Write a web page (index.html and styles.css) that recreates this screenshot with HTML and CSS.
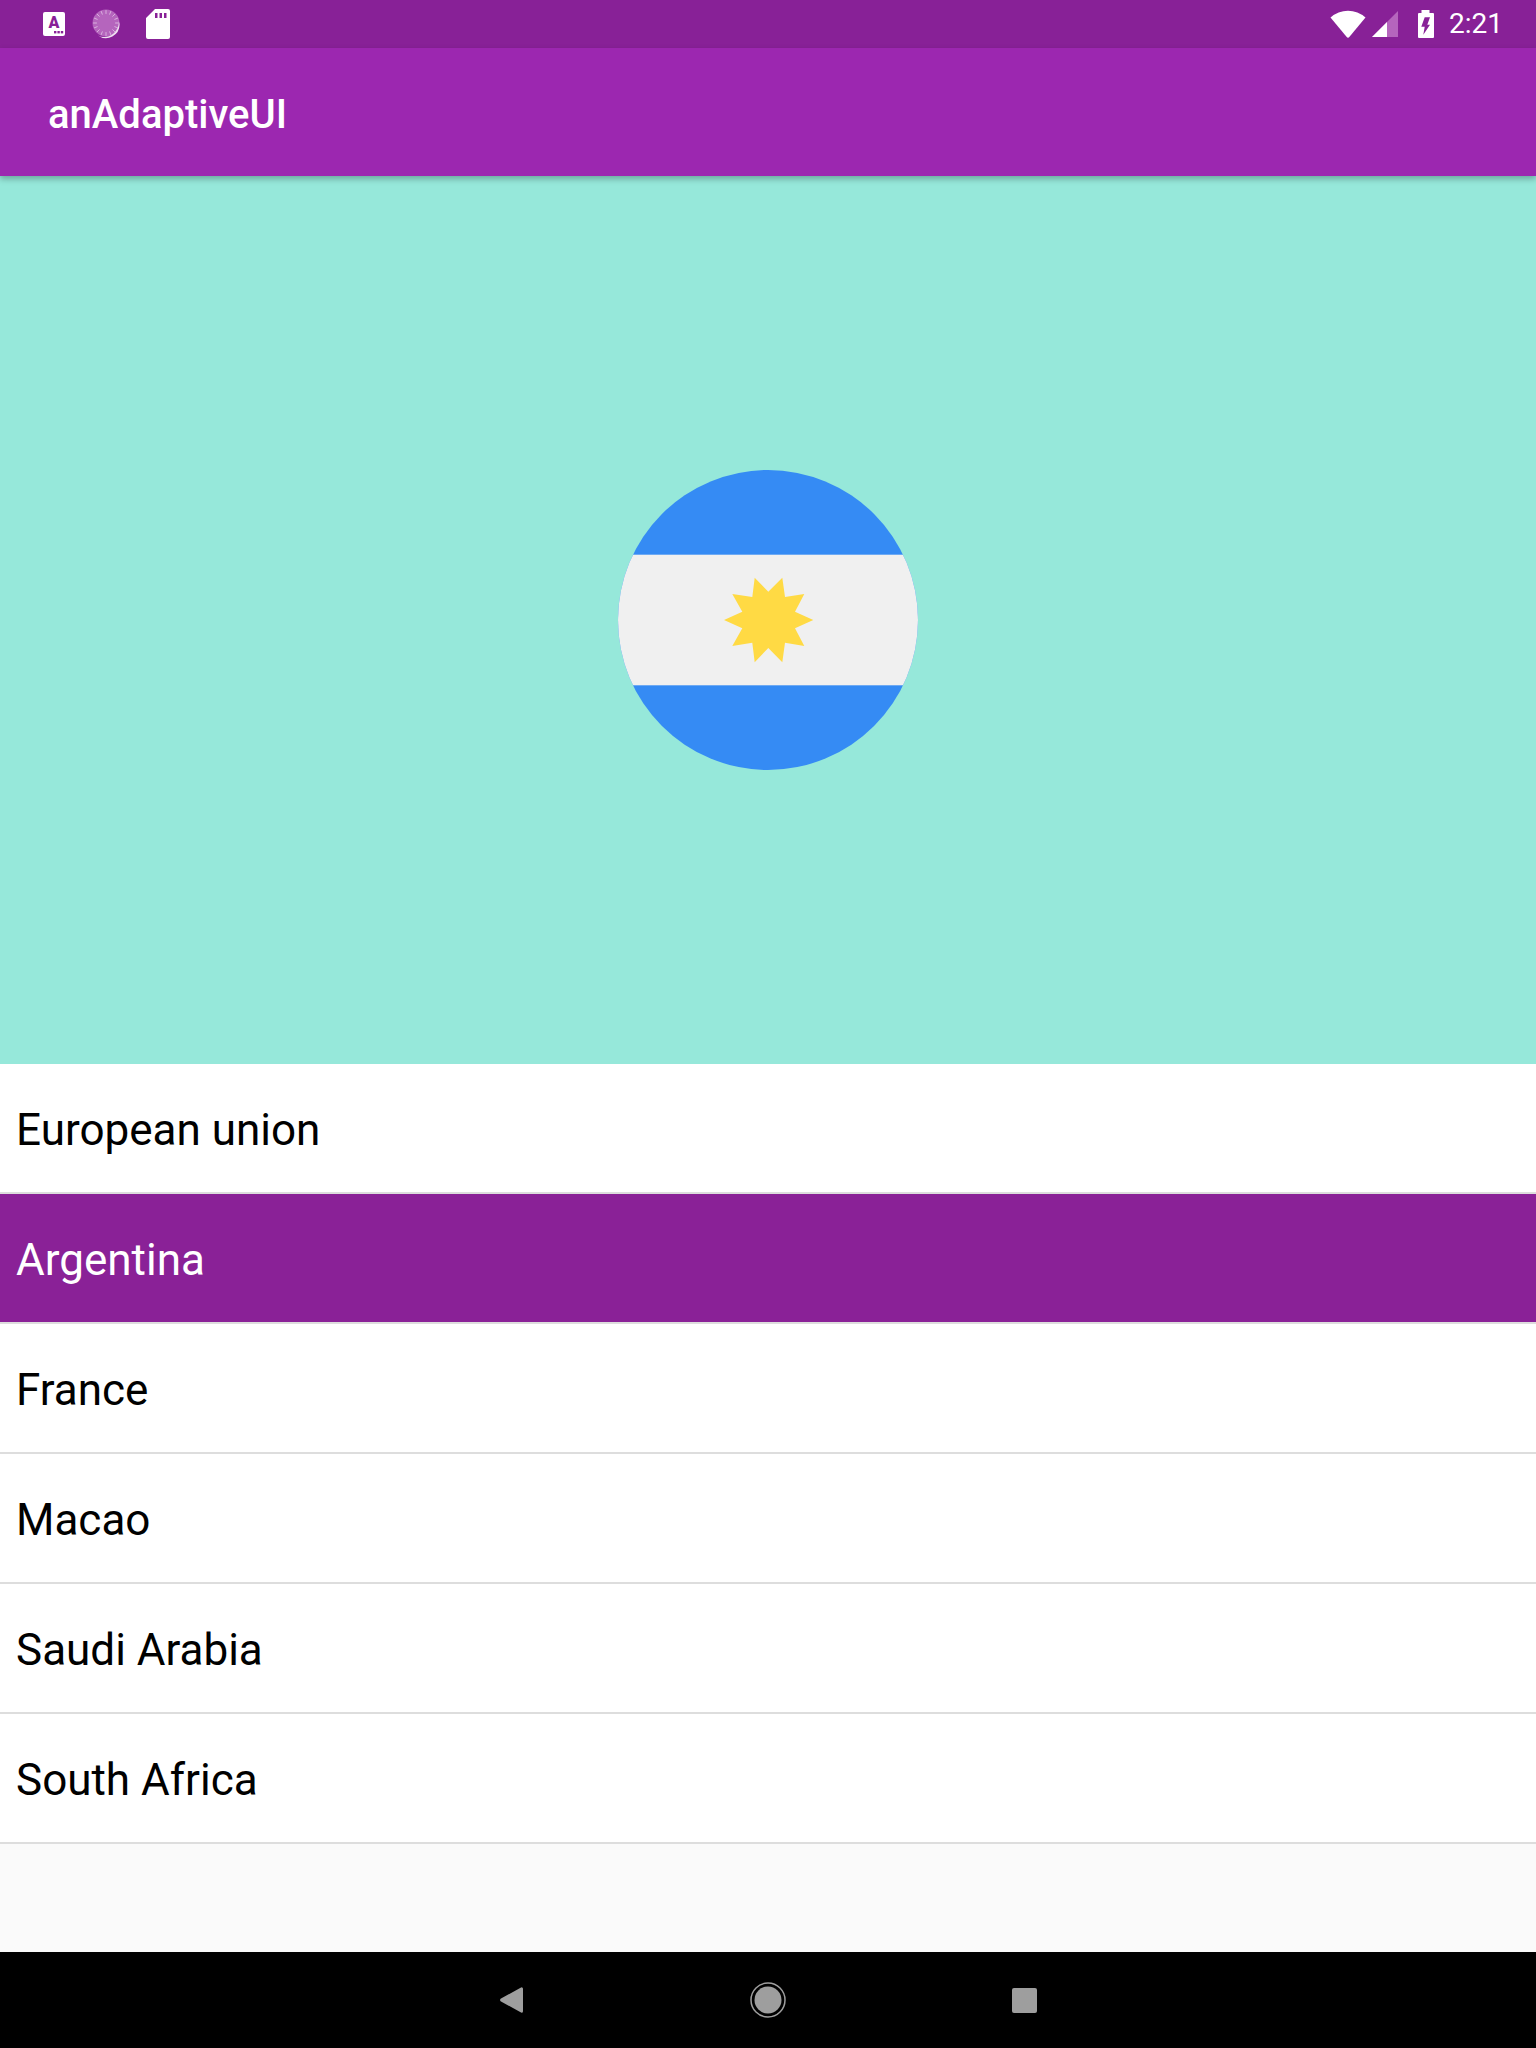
FILE: index.html
```html
<!DOCTYPE html>
<html>
<head>
    <title>anAdaptiveUI</title>
    <link rel="stylesheet" href="styles.css">
</head>
<body>
    <div class="status-bar">
        <div class="status-left">
            <!-- Notification icons -->
            <svg class="icon-a" width="22" height="24" viewBox="0 0 22 24">
                <rect x="0" y="0" width="22" height="24" rx="2" fill="#fff"/>
                <text x="11" y="15.5" text-anchor="middle" class="icon-a-letter">A</text>
                <rect x="11" y="19" width="2.4" height="2.4" fill="#882197"/>
                <rect x="14.4" y="19" width="2.4" height="2.4" fill="#882197"/>
                <rect x="17.8" y="19" width="2.4" height="2.4" fill="#882197"/>
            </svg>
            <svg class="icon-disc" width="30" height="30" viewBox="0 0 30 30">
                <circle cx="14" cy="14" r="13.5" fill="#b565bd"/>
                <path d="M27.5 15 A13.5 13.5 0 0 1 6 26.5 A14 14 0 0 0 25 20 A12 12 0 0 0 26.5 11 Z" fill="#efdff1"/>
                <g stroke="#d9b0de" stroke-width="1" stroke-linecap="round">
                    <path d="M14 1.5v3M14 23.500v3M1.500 14h3M23.500 14h3M5.200 5.200l2.100 2.100M20.700 20.700l2.100 2.100M5.200 22.800l2.100-2.100M20.700 7.300l2.100-2.100"/>
                    <path d="M9.200 2.400l1.100 2.800M17.700 22.800l1.100 2.800M2.400 18.800l2.800-1.100M22.800 10.300l2.800-1.100M2.400 9.200l2.800 1.100M22.800 17.700l2.800 1.100M9.200 25.600l1.100-2.800M17.700 5.200l1.100-2.800"/>
                </g>
            </svg>
            <svg class="icon-sd" width="24" height="30" viewBox="0 0 24 30">
                <path fill-rule="evenodd" fill="#fff" d="M9 0H22a2 2 0 0 1 2 2V28a2 2 0 0 1-2 2H2a2 2 0 0 1-2-2V9Z M9 4v5h2.500V4Z M13.500 4v5h2.500V4Z M18 4v5h2.500V4Z"/>
            </svg>
        </div>
        <div class="status-right">
            <svg width="36" height="28" viewBox="0 0 36 28">
                <path d="M0.500 7.500 A26 26 0 0 1 35.500 7.500 L19.500 26.800 a2 2 0 0 1-3 0 Z" fill="#fff"/>
            </svg>
            <svg width="26" height="26" viewBox="0 0 26 26">
                <path d="M26 0V26H0Z" fill="#b565bd"/>
                <path d="M15 11V26H0Z" fill="#fff"/>
            </svg>
            <svg class="icon-battery" width="16" height="28" viewBox="0 0 16 28">
                <path fill-rule="evenodd" fill="#fff" d="M3.500 0H11.500V3H15a1 1 0 0 1 1 1V27a1 1 0 0 1-1 1H1a1 1 0 0 1-1-1V4a1 1 0 0 1 1-1H3.500Z M6.700 7.300H12L9.300 14.700H12L5.300 24.700L6.700 16.700H3.300Z"/>
            </svg>
            <span class="status-time">2:21</span>
        </div>
    </div>

    <div class="app-bar">anAdaptiveUI</div>

    <div class="hero">
        <svg class="flag" width="300" height="300" viewBox="0 0 300 300">
            <defs>
                <clipPath id="flag-clip"><circle cx="150" cy="150" r="150"/></clipPath>
            </defs>
            <g clip-path="url(#flag-clip)">
                <rect width="300" height="300" fill="#358bf4"/>
                <rect y="84.700" width="300" height="130.600" fill="#f0f0f0"/>
            </g>
            <polygon fill="#ffda44" points="136.700,107.700 150.300,121.700 164.300,107.700 167,127 186.300,124 177,141.700 195.300,150 177,158.300 186.300,176 167,172.700 164.300,192.300 150.300,178 136.700,192.300 134.300,172.700 114.300,176 124.300,158.300 106,150 124.300,141.700 114.300,124 134.300,127"/>
        </svg>
    </div>

    <div class="country-list">
        <div class="country-row">European union</div>
        <div class="country-row selected">Argentina</div>
        <div class="country-row">France</div>
        <div class="country-row">Macao</div>
        <div class="country-row">Saudi Arabia</div>
        <div class="country-row">South Africa</div>
    </div>

    <div class="nav-bar">
        <div class="nav-cell">
            <svg width="24" height="26" viewBox="0 0 24 26">
                <path d="M21.500 0.300 a1.500 1.500 0 0 1 1.500 1.500 V24.200 a1.500 1.500 0 0 1-1.500 1.500 L1 14.500 a1.700 1.700 0 0 1 0-3 Z" fill="#9e9e9e"/>
            </svg>
        </div>
        <div class="nav-cell">
            <svg width="36" height="36" viewBox="0 0 36 36">
                <circle cx="18" cy="18" r="17" fill="none" stroke="#9e9e9e" stroke-width="1.500"/>
                <circle cx="18" cy="18" r="13.500" fill="#9e9e9e"/>
            </svg>
        </div>
        <div class="nav-cell">
            <div class="nav-square"></div>
        </div>
    </div>
</body>
</html>
```

FILE: styles.css
```css
/* Android tablet screen, 1536 x 2048 */
html, body {
    margin: 0;
    padding: 0;
}

body {
    width: 1536px;
    height: 2048px;
    display: flex;
    flex-direction: column;
    overflow: hidden;
    font-family: Roboto, "Noto Sans", sans-serif;
    background: #fafafa;
}

/* Status bar */
.status-bar {
    height: 48px;
    flex: none;
    display: flex;
    align-items: center;
    justify-content: space-between;
    background: #882197;
    color: #fff;
}

.status-left {
    display: flex;
    align-items: center;
    padding-left: 43px;
}

.icon-a {
    margin-right: 27px;
}

.icon-disc {
    margin-right: 24px;
}

.icon-a-letter {
    font-family: Roboto, sans-serif;
    font-size: 16px;
    font-weight: 900;
    fill: #882197;
}

.status-right {
    display: flex;
    align-items: center;
    gap: 6px;
    padding-right: 33px;
}

.icon-battery {
    margin-left: 14px;
    margin-right: 9px;
}

.status-time {
    font-size: 28px;
    line-height: 32px;
}

/* Toolbar */
.app-bar {
    height: 128px;
    flex: none;
    display: flex;
    align-items: center;
    padding-left: 48px;
    padding-top: 4px;
    box-sizing: border-box;
    background: #9c27b0;
    color: #fff;
    font-size: 40px;
    font-weight: 500;
    position: relative;
    z-index: 1;
    box-shadow: 0 3px 6px rgba(0, 0, 0, 0.28);
}

/* Selected flag */
.hero {
    height: 888px;
    flex: none;
    display: flex;
    align-items: center;
    justify-content: center;
    background: #96e8da;
}

/* Country list */
.country-list {
    flex: 1;
    background: #fafafa;
}

.country-row {
    height: 130px;
    box-sizing: border-box;
    display: flex;
    align-items: center;
    padding-left: 16px;
    padding-top: 3px;
    background: #fff;
    border-bottom: 2px solid #ddd;
    color: #000;
    font-size: 44px;
}

.country-row.selected {
    background: #8a2197;
    color: #fff;
}

/* Navigation bar */
.nav-bar {
    height: 96px;
    flex: none;
    display: flex;
    align-items: center;
    justify-content: center;
    background: #000;
}

.nav-cell {
    width: 256px;
    display: flex;
    justify-content: center;
}

.nav-square {
    width: 25px;
    height: 25px;
    border-radius: 2px;
    background: #9e9e9e;
}
```
